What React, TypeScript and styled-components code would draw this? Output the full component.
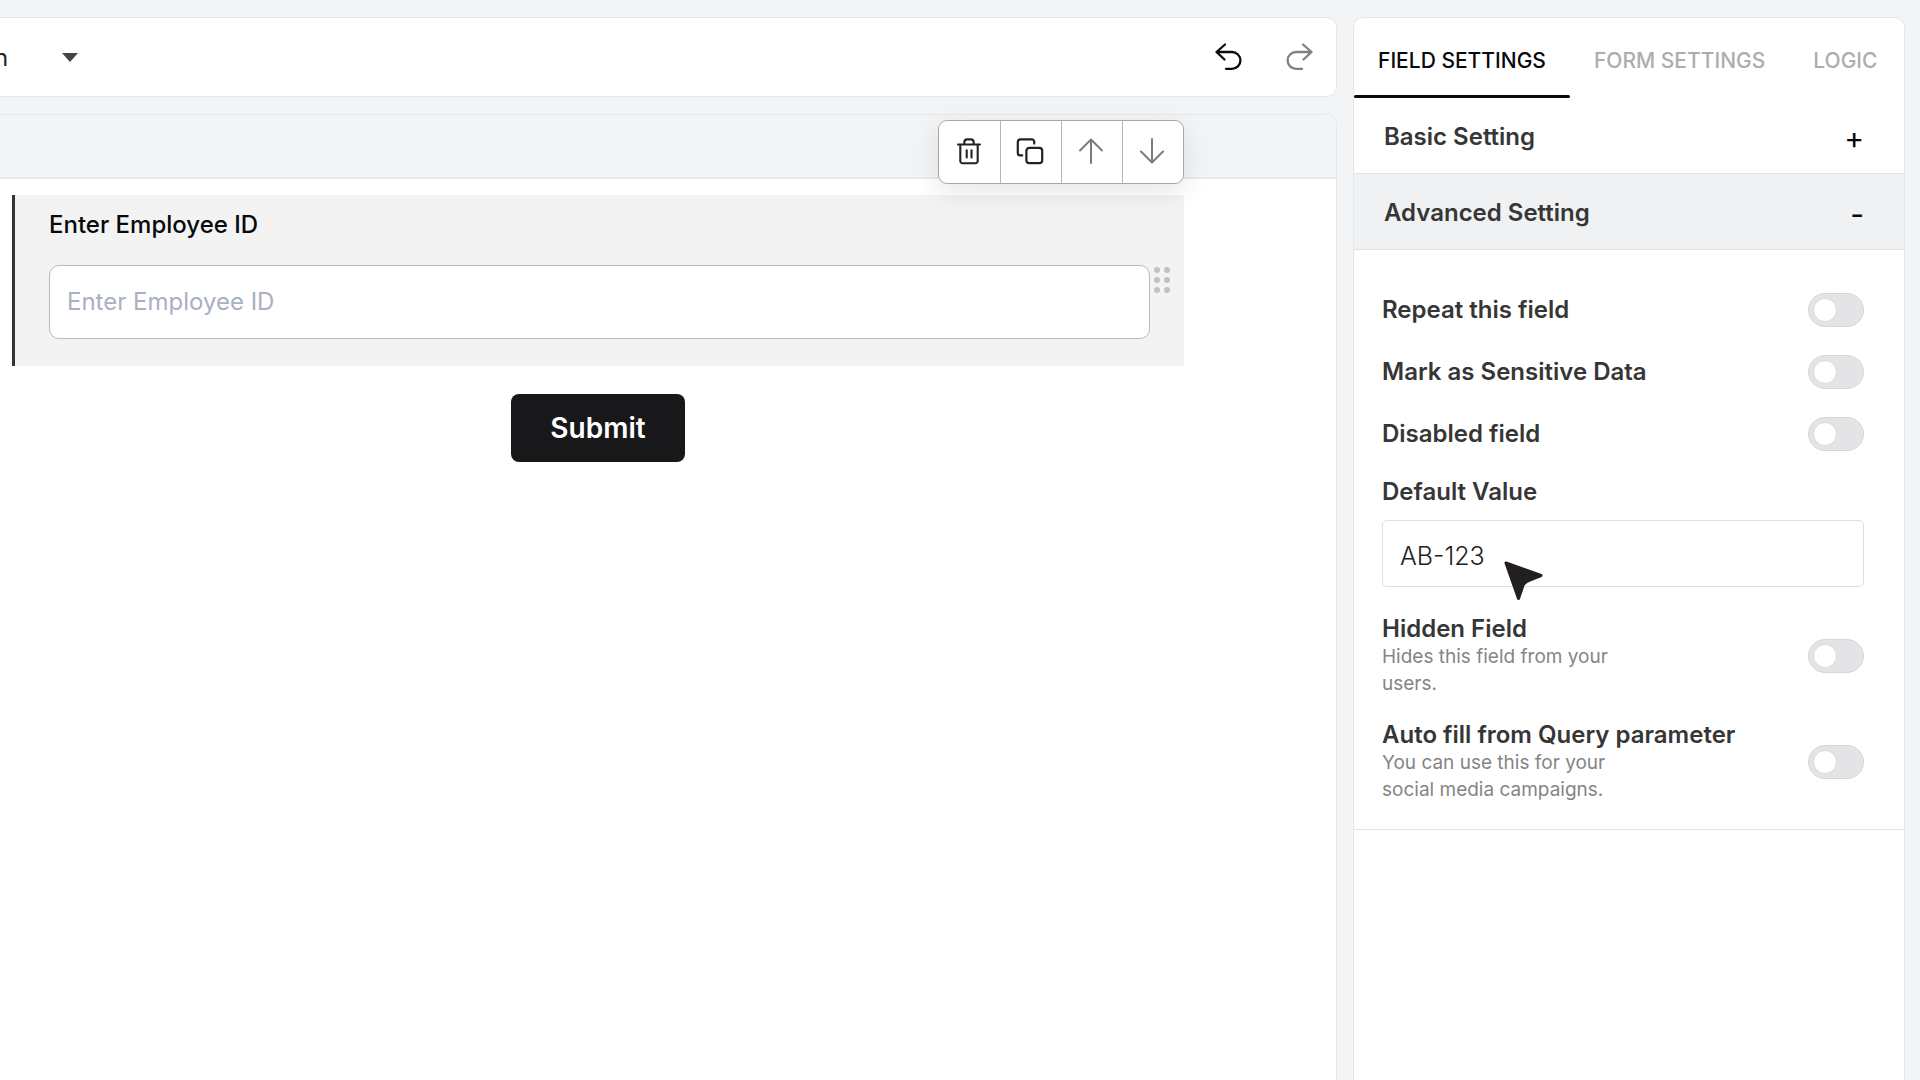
import React, { useId, useState } from "react";
import styled, { createGlobalStyle } from "styled-components";

const GlobalStyle = createGlobalStyle`
  *, *::before, *::after { box-sizing: border-box; }
  body {
    margin: 0;
    background: #f3f4f6;
    color: #363636;
    font-family: Inter, "Liberation Sans", sans-serif;
    font-size: 24px;
    overflow: hidden;
  }
  button, input, select { font: inherit; color: inherit; margin: 0; }
  button { padding: 0; border: 0; background: none; cursor: pointer; }
`;

const Page = styled.div`
  display: flex;
  gap: 16px;
  height: 100vh;
  padding: 17px 15px 0 0;
`;

const Workspace = styled.main`
  flex: 1;
  min-width: 0;
  display: flex;
  flex-direction: column;
  gap: 17px;
`;

const TopBar = styled.header`
  display: flex;
  align-items: center;
  justify-content: space-between;
  height: 80px;
  padding-right: 20px;
  overflow: hidden;
  background: #ffffff;
  border: 1px solid #e5e7eb;
  border-left: 0;
  border-radius: 0 10px 10px 0;
`;

const PagePicker = styled.div`
  display: flex;
  align-items: center;
  margin-left: -6px;
`;

const PageSelect = styled.select`
  appearance: none;
  width: 68px;
  height: 40px;
  padding: 0;
  border: 0;
  background: none;
  color: #222222;
`;

const History = styled.div`
  display: flex;
  gap: 40px;
`;

const IconButton = styled.button<{ $muted?: boolean }>`
  display: flex;
  align-items: center;
  justify-content: center;
  width: 32px;
  height: 32px;
  color: ${(p) => (p.$muted ? "#808080" : "#0b0b0d")};
`;

const Canvas = styled.section`
  flex: 1;
  background: #ffffff;
  border: 1px solid #e5e7eb;
  border-left: 0;
  border-bottom: 0;
  border-radius: 0 10px 0 0;
`;

const CanvasHeader = styled.div`
  height: 64px;
  background: #f3f4f6;
  border-bottom: 2px solid #e9eaec;
  border-radius: 0 10px 0 0;
`;

const Form = styled.form`
  display: flex;
  flex-direction: column;
  align-items: center;
  gap: 28px;
  padding: 16px 152px 0 12px;
`;

const FieldBlock = styled.div`
  position: relative;
  align-self: stretch;
  padding: 12px 34px 27px;
  background: #f3f3f3;
  border-left: 3px solid #333333;
`;

const FieldLabel = styled.label`
  display: block;
  margin-bottom: 22px;
  font-weight: 500;
  line-height: 36px;
  color: #08090c;
`;

const FieldInput = styled.input`
  display: block;
  width: 100%;
  height: 74px;
  padding: 0 17px 2px;
  background: #ffffff;
  border: 1px solid #b4bac6;
  border-radius: 10px;
  outline: 0;
  &::placeholder { color: #a9b0c0; opacity: 1; }
`;

const DragHandle = styled.button`
  position: absolute;
  top: 72px;
  right: 13px;
  width: 17px;
  height: 26px;
  display: grid;
  grid-template-columns: 6px 6px;
  gap: 4px;
`;

const Dot = styled.span`
  width: 6px;
  height: 6px;
  border-radius: 50%;
  background: #c2c2c2;
`;

const FieldTools = styled.div`
  position: absolute;
  top: -75px;
  right: 0;
  display: flex;
  height: 64px;
  background: #ffffff;
  border: 1px solid #a8a8a8;
  border-radius: 9px;
  box-shadow: 0 8px 28px rgba(0, 0, 0, 0.1);
`;

const ToolButton = styled.button<{ $muted?: boolean }>`
  display: flex;
  align-items: center;
  justify-content: center;
  width: 61px;
  padding: 0 2px 2px 0;
  color: ${(p) => (p.$muted ? "#7b7b7b" : "#222222")};
  & + & { border-left: 1px solid #b5b5b5; }
`;

const Submit = styled.button`
  width: 174px;
  height: 68px;
  background: #18181a;
  color: #ffffff;
  font-size: 28px;
  font-weight: 600;
  border-radius: 8px;
`;

const Sidebar = styled.aside`
  flex: 0 0 552px;
  background: #ffffff;
  border: 1px solid #e5e7eb;
  border-bottom: 0;
  border-radius: 10px 10px 0 0;
`;

const Tabs = styled.div`
  display: flex;
  height: 80px;
`;

const Tab = styled.button<{ $active?: boolean }>`
  flex: none;
  position: relative;
  height: 80px;
  padding: 4px 24px 0;
  font-size: 21px;
  font-weight: 500;
  white-space: nowrap;
  color: ${(p) => (p.$active ? "#08090b" : "#adadad")};
  &::after {
    content: "";
    position: absolute;
    left: 0;
    right: 0;
    bottom: 0;
    height: 3px;
    border-radius: 2px;
    background: ${(p) => (p.$active ? "#08090b" : "transparent")};
  }
`;

const SectionToggle = styled.button<{ $open?: boolean }>`
  display: flex;
  align-items: center;
  justify-content: space-between;
  width: 100%;
  height: 76px;
  padding: 2px 40px 0 30px;
  font-weight: 600;
  text-align: left;
  background: ${(p) => (p.$open ? "#f0f1f3" : "#ffffff")};
  border-bottom: 1px solid #dfe2e8;
`;

const Sign = styled.span`
  padding-top: 2px;
  font-size: 30px;
  font-weight: 400;
  line-height: 28px;
  color: #08090b;
`;

const SectionBody = styled.div`
  padding: 29px 40px 14px 28px;
  border-bottom: 1px solid #dfe2e8;
`;

const SettingRow = styled.div<{ $tall?: boolean }>`
  display: flex;
  align-items: center;
  justify-content: space-between;
  min-height: 62px;
  padding: ${(p) => (p.$tall ? "12px 0" : "0")};
`;

const SettingLabel = styled.label`
  display: block;
  font-weight: 600;
  line-height: 28px;
`;

const Hint = styled.p`
  width: 240px;
  margin: 0;
  font-size: 19px;
  line-height: 27px;
  color: #858585;
`;

const Switch = styled.input`
  appearance: none;
  flex: none;
  display: flex;
  align-items: center;
  width: 56px;
  height: 34px;
  padding-left: 4px;
  background: #e4e4e6;
  border: 1px solid #d6d6d9;
  border-radius: 17px;
  cursor: pointer;
  &::before {
    content: "";
    width: 24px;
    height: 24px;
    border-radius: 50%;
    background: #ffffff;
    border: 1px solid #d9d9dc;
  }
  &:checked { background: #18181a; }
  &:checked::before { margin-left: 22px; }
`;

const DefaultValue = styled.div`
  position: relative;
  display: flex;
  flex-direction: column;
  gap: 14px;
  padding: 13px 0 16px;
`;

const ValueInput = styled.input`
  width: 100%;
  height: 67px;
  padding: 4px 17px 0;
  font-size: 25px;
  font-weight: 300;
  color: #222222;
  border: 1px solid #d8deea;
  border-radius: 5px;
  outline: 0;
`;

const Pointer = styled.svg`
  position: absolute;
  left: 121px;
  top: 95px;
  pointer-events: none;
`;

const stroke = {
  fill: "none",
  stroke: "currentColor",
  strokeLinecap: "round" as const,
  strokeLinejoin: "round" as const,
};

const UndoIcon = () => (
  <svg width="32" height="32" viewBox="0 0 32 32" strokeWidth="2.3" {...stroke}>
    <path d="M13 3.5 4.5 11l8 7.5M4.5 11H20a8.4 8.4 0 0 1 0 16.8h-6" />
  </svg>
);

const RedoIcon = () => (
  <svg width="32" height="32" viewBox="0 0 32 32" strokeWidth="2.3" {...stroke}>
    <path d="M19 3.5 27.5 11l-8 7.5M27.5 11H12a8.4 8.4 0 0 0 0 16.8h6" />
  </svg>
);

const TrashIcon = () => (
  <svg width="26" height="28" viewBox="0 0 26 28" strokeWidth="2.1" {...stroke}>
    <path d="M2 7.5h22M4.3 7.5V24a2.3 2.3 0 0 0 2.3 2.3h12.8a2.3 2.3 0 0 0 2.3-2.3V7.5M8.3 7.2V5.4a3 3 0 0 1 3-3h3.4a3 3 0 0 1 3 3v1.8M10.7 13.2v7.2M15.5 13.2v7.2" />
  </svg>
);

const CopyIcon = () => (
  <svg width="28" height="28" viewBox="0 0 28 28" strokeWidth="2.2" {...stroke}>
    <rect x="10.4" y="10.8" width="15.8" height="15.4" rx="3" />
    <path d="M18.2 6.6V4.8a2.4 2.4 0 0 0-2.4-2.4H4.6A2.8 2.8 0 0 0 1.8 5.2V16a2.4 2.4 0 0 0 2.4 2.4h2" />
  </svg>
);

const ArrowUpIcon = () => (
  <svg width="26" height="28" viewBox="0 0 26 28" strokeWidth="2" {...stroke}>
    <path d="M13 26V2.5M2 13.5l11-11 11 11" />
  </svg>
);

const ArrowDownIcon = () => (
  <svg width="26" height="28" viewBox="0 0 26 28" strokeWidth="2" {...stroke}>
    <path d="M13 2v23.5M2 14.5l11 11 11-11" />
  </svg>
);

function Setting({ label, hint }: { label: string; hint?: string }) {
  const id = useId();
  return (
    <SettingRow $tall={Boolean(hint)}>
      <div>
        <SettingLabel htmlFor={id}>{label}</SettingLabel>
        {hint && <Hint>{hint}</Hint>}
      </div>
      <Switch id={id} type="checkbox" />
    </SettingRow>
  );
}

export default function App() {
  const [value, setValue] = useState("AB-123");

  return (
    <>
      <GlobalStyle />
      <Page>
        <Workspace>
          <TopBar>
            <PagePicker>
              <PageSelect aria-label="Page">
                <option>n</option>
              </PageSelect>
              <svg width="16" height="9" viewBox="0 0 16 9">
                <path d="M0 0h16L8 9z" fill="#444444" />
              </svg>
            </PagePicker>
            <History>
              <IconButton aria-label="Undo">
                <UndoIcon />
              </IconButton>
              <IconButton aria-label="Redo" $muted>
                <RedoIcon />
              </IconButton>
            </History>
          </TopBar>
          <Canvas>
            <CanvasHeader />
            <Form onSubmit={(e) => e.preventDefault()}>
              <FieldBlock>
                <FieldLabel htmlFor="employee">Enter Employee ID</FieldLabel>
                <FieldInput id="employee" placeholder="Enter Employee ID" />
                <DragHandle type="button" aria-label="Drag field">
                  {[0, 1, 2, 3, 4, 5].map((n) => (
                    <Dot key={n} />
                  ))}
                </DragHandle>
                <FieldTools>
                  <ToolButton type="button" aria-label="Delete">
                    <TrashIcon />
                  </ToolButton>
                  <ToolButton type="button" aria-label="Duplicate">
                    <CopyIcon />
                  </ToolButton>
                  <ToolButton type="button" aria-label="Move up" $muted>
                    <ArrowUpIcon />
                  </ToolButton>
                  <ToolButton type="button" aria-label="Move down" $muted>
                    <ArrowDownIcon />
                  </ToolButton>
                </FieldTools>
              </FieldBlock>
              <Submit type="submit">Submit</Submit>
            </Form>
          </Canvas>
        </Workspace>
        <Sidebar>
          <Tabs role="tablist">
            <Tab role="tab" aria-selected="true" $active>
              FIELD SETTINGS
            </Tab>
            <Tab role="tab" aria-selected="false">FORM SETTINGS</Tab>
            <Tab role="tab" aria-selected="false">LOGIC</Tab>
          </Tabs>
          <SectionToggle aria-expanded="false">
            Basic Setting <Sign>+</Sign>
          </SectionToggle>
          <SectionToggle aria-expanded="true" $open>
            Advanced Setting <Sign>-</Sign>
          </SectionToggle>
          <SectionBody>
            <Setting label="Repeat this field" />
            <Setting label="Mark as Sensitive Data" />
            <Setting label="Disabled field" />
            <DefaultValue>
              <SettingLabel htmlFor="default-value">Default Value</SettingLabel>
              <ValueInput
                id="default-value"
                value={value}
                onChange={(e) => setValue(e.target.value)}
              />
              <Pointer width="42" height="42" viewBox="0 0 42 42">
                <path
                  d="M3 3 38 15.5 25.5 20.5Q20.5 22.5 19.5 27L15.5 38.5Z"
                  fill="#231f20"
                  stroke="#231f20"
                  strokeWidth="3"
                  strokeLinejoin="round"
                />
              </Pointer>
            </DefaultValue>
            <Setting label="Hidden Field" hint="Hides this field from your users." />
            <Setting
              label="Auto fill from Query parameter"
              hint="You can use this for your social media campaigns."
            />
          </SectionBody>
        </Sidebar>
      </Page>
    </>
  );
}
